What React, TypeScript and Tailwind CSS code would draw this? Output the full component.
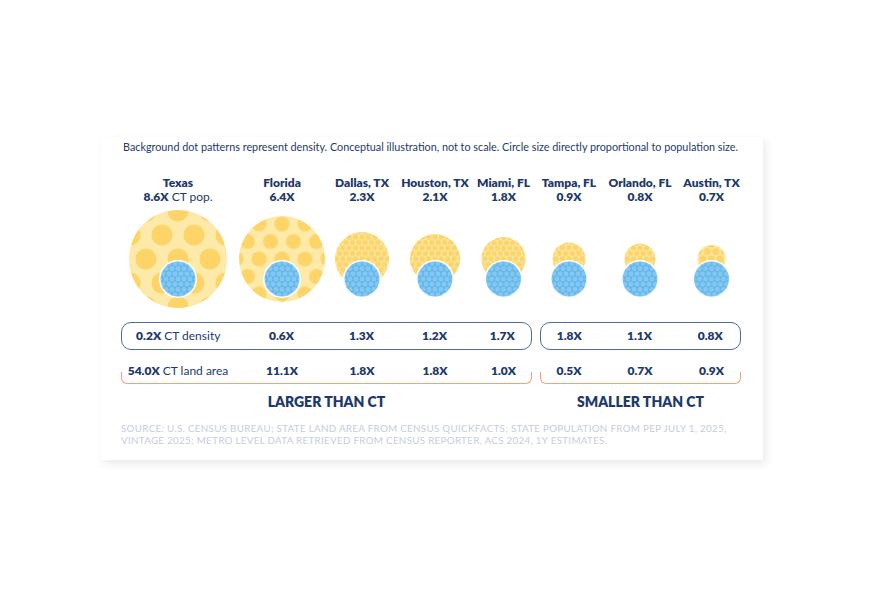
import React from "react";

type Col = {
  name: string;
  pop: string;
  popSuffix?: string;
  w: number;
  r: number;
  sx: number;
  sy: number;
  dr: number;
  density: string;
  densitySuffix?: string;
  land: string;
  landSuffix?: string;
};

const left: Col[] = [
  { name: "Texas", pop: "8.6X", popSuffix: "CT pop.", w: 114, r: 49, sx: 32, sy: 24, dr: 10.5, density: "0.2X", densitySuffix: "CT density", land: "54.0X", landSuffix: "CT land area" },
  { name: "Florida", pop: "6.4X", w: 94, r: 43, sx: 23, sy: 17.5, dr: 7.5, density: "0.6X", land: "11.1X" },
  { name: "Dallas, TX", pop: "2.3X", w: 66, r: 27, sx: 6.4, sy: 5.5, dr: 2.7, density: "1.3X", land: "1.8X" },
  { name: "Houston, TX", pop: "2.1X", w: 80, r: 25, sx: 6.4, sy: 5.5, dr: 2.7, density: "1.2X", land: "1.8X" },
  { name: "Miami, FL", pop: "1.8X", w: 57, r: 22, sx: 6.2, sy: 5.4, dr: 2.6, density: "1.7X", land: "1.0X" },
];

const right: Col[] = [
  { name: "Tampa, FL", pop: "0.9X", w: 58, r: 16.5, sx: 6.6, sy: 5.7, dr: 2.8, density: "1.8X", land: "0.5X" },
  { name: "Orlando, FL", pop: "0.8X", w: 84, r: 15.5, sx: 6.4, sy: 5.5, dr: 2.7, density: "1.1X", land: "0.7X" },
  { name: "Austin, TX", pop: "0.7X", w: 59, r: 14, sx: 8.6, sy: 7.4, dr: 3.6, density: "0.8X", land: "0.9X" },
];

function Circles({ c, id }: { c: Col; id: string }) {
  const cx = c.w / 2;
  const cy = 51;
  const by = 71;
  const br = 17.5;
  return (
    <svg width={c.w} height={100} viewBox={`0 0 ${c.w} 100`} className="block">
      <defs>
        <pattern id={`y-${id}`} patternUnits="userSpaceOnUse" width={c.sx} height={c.sy * 2} x={cx - c.sx / 2} y={cy - c.sy}>
          <rect width={c.sx} height={c.sy * 2} fill="#fde9a8" />
          <circle cx={0} cy={0} r={c.dr} fill="#fcd468" />
          <circle cx={c.sx} cy={0} r={c.dr} fill="#fcd468" />
          <circle cx={0} cy={c.sy * 2} r={c.dr} fill="#fcd468" />
          <circle cx={c.sx} cy={c.sy * 2} r={c.dr} fill="#fcd468" />
          <circle cx={c.sx / 2} cy={c.sy} r={c.dr} fill="#fcd468" />
        </pattern>
        <pattern id={`b-${id}`} patternUnits="userSpaceOnUse" width={6} height={10.4} x={cx - 3} y={by - 5.2}>
          <rect width={6} height={10.4} fill="#5ab3ea" />
          <circle cx={0} cy={0} r={2.5} fill="#84c8f1" />
          <circle cx={6} cy={0} r={2.5} fill="#84c8f1" />
          <circle cx={0} cy={10.4} r={2.5} fill="#84c8f1" />
          <circle cx={6} cy={10.4} r={2.5} fill="#84c8f1" />
          <circle cx={3} cy={5.2} r={2.5} fill="#84c8f1" />
        </pattern>
      </defs>
      <circle cx={cx} cy={cy} r={c.r} fill={`url(#y-${id})`} />
      <circle cx={cx} cy={by} r={br + 1.5} fill="#ffffff" />
      <circle cx={cx} cy={by} r={br} fill={`url(#b-${id})`} />
    </svg>
  );
}

function Header({ c }: { c: Col }) {
  return (
    <div style={{ width: c.w }} className="flex flex-col items-center text-[12px] leading-[14px] font-extrabold text-[#1d3a6b] whitespace-nowrap">
      <span>{c.name}</span>
      <span>
        {c.pop}
        {c.popSuffix ? <span className="font-normal"> {c.popSuffix}</span> : null}
      </span>
    </div>
  );
}

function Val({ w, v, s }: { w: number; v: string; s?: string }) {
  return (
    <div style={{ width: w }} className="flex justify-center text-[12px] leading-[14px] font-extrabold text-[#1d3a6b] whitespace-nowrap">
      <span>
        {v}
        {s ? <span className="font-normal"> {s}</span> : null}
      </span>
    </div>
  );
}

export default function App() {
  return (
    <div className="min-h-[608px] w-[873px] bg-white pt-[137px] pl-[101px]" style={{ fontFamily: "Lato, 'Open Sans', sans-serif" }}>
      <div className="w-[662px] h-[323px] bg-white shadow-[3px_4px_8px_rgba(20,30,60,0.09)] pl-[20px] pt-[4px]">
        <p className="text-[10.8px] leading-[12px] text-[#1d3a6b] pl-[2px] whitespace-nowrap">
          Background dot patterns represent density. Conceptual illustration, not to scale. Circle size directly proportional to population size.
        </p>

        {/* headers */}
        <div className="flex gap-[8px] mt-[23px]">
          <div className="flex">{left.map((c) => <Header key={c.name} c={c} />)}</div>
          <div className="flex">{right.map((c) => <Header key={c.name} c={c} />)}</div>
        </div>

        {/* circles */}
        <div className="flex gap-[8px] mt-[4px]">
          <div className="flex">{left.map((c, i) => <Circles key={c.name} c={c} id={`l${i}`} />)}</div>
          <div className="flex">{right.map((c, i) => <Circles key={c.name} c={c} id={`r${i}`} />)}</div>
        </div>

        {/* density */}
        <div className="flex gap-[8px] mt-[14px]">
          <div className="flex items-center w-[411px] h-[28px] border-[1.5px] border-[#4f6b96] rounded-[10px]">
            {left.map((c, i) => (
              <Val key={c.name} w={i === 0 || i === left.length - 1 ? c.w - 1.5 : c.w} v={c.density} s={c.densitySuffix} />
            ))}
          </div>
          <div className="flex items-center w-[201px] h-[28px] border-[1.5px] border-[#4f6b96] rounded-[10px]">
            {right.map((c, i) => (
              <Val key={c.name} w={i === 0 || i === right.length - 1 ? c.w - 1.5 : c.w} v={c.density} />
            ))}
          </div>
        </div>

        {/* land area */}
        <div className="flex gap-[8px] mt-[14px]">
          <div className="flex flex-col w-[411px]">
            <div className="flex">
              {left.map((c) => (
                <Val key={c.name} w={c.w} v={c.land} s={c.landSuffix} />
              ))}
            </div>
            <div className="h-[12px] -mt-[6px] border-x-[1.5px] border-b-[1.5px] border-[#f4a27c] rounded-b-[6px]" />
          </div>
          <div className="flex flex-col w-[201px]">
            <div className="flex">
              {right.map((c) => (
                <Val key={c.name} w={c.w} v={c.land} />
              ))}
            </div>
            <div className="h-[12px] -mt-[6px] border-x-[1.5px] border-b-[1.5px] border-[#f4a27c] rounded-b-[6px]" />
          </div>
        </div>

        {/* group labels */}
        <div className="flex gap-[8px] mt-[10px] text-[14px] leading-[16px] font-extrabold text-[#1d3a6b]">
          <div className="w-[411px] text-center">LARGER THAN CT</div>
          <div className="w-[201px] text-center">SMALLER THAN CT</div>
        </div>

        {/* source */}
        <p className="mt-[12px] text-[9.8px] leading-[12px] tracking-[0.3px] text-[#c6cce0] uppercase whitespace-nowrap">
          Source: U.S. Census Bureau; State land area from Census QuickFacts; State population from PEP July 1, 2025,
          <br />
          Vintage 2025; Metro level data retrieved from Census Reporter, ACS 2024, 1Y estimates.
        </p>
      </div>
    </div>
  );
}
